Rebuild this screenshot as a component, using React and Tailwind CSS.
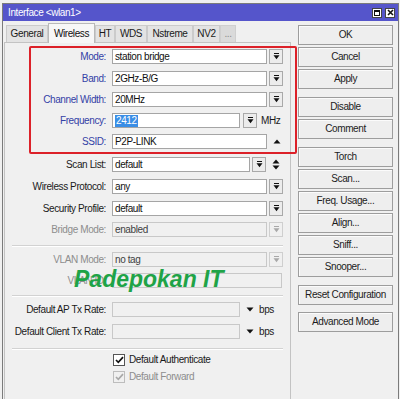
import React from "react";

const Drop = ({ disabled }) => (
  <div
    className={`ml-[2px] w-[14px] h-[15px] border flex items-center justify-center ${
      disabled ? "border-[#cfcfcf] bg-[#f0f0f0]" : "border-[#a9a9a9] bg-[#ececec]"
    }`}
  >
    <svg width="7" height="7" viewBox="0 0 7 7">
      <rect x="1" y="0" width="5" height="1" fill={disabled ? "#a8a8a8" : "#111"} />
      <path d="M0.5 2.2 L6.5 2.2 L3.5 6.2 Z" fill={disabled ? "#a8a8a8" : "#111"} />
    </svg>
  </div>
);

const Input = ({ w, children, disabled, sel }) => (
  <div
    className={`h-[15px] border flex items-center pl-[2px] ${
      disabled ? "border-[#c8c8c8] bg-[#f0f0f0] text-[#404040]" : "border-[#a5a5a5] bg-white text-[#111]"
    }`}
    style={{ width: w }}
  >
    {sel ? <span className="bg-[#3a8ee6] text-white px-[1px] leading-[12px]">{children}</span> : children}
  </div>
);

const Row = ({ label, color = "text-[#1a1a1a]", mt, children }) => (
  <div className="flex items-center h-[15px]" style={{ marginTop: mt }}>
    <div className={`w-[101px] text-right whitespace-nowrap ${color}`}>{label}</div>
    <div className="ml-[6px] flex items-center">{children}</div>
  </div>
);

const Sep = ({ mt }) => (
  <div className="ml-[7px] w-[271px] h-[2px] border-t border-[#d2d2d2] bg-white/0" style={{ marginTop: mt }}>
    <div className="h-px bg-white" />
  </div>
);

const Btn = ({ children, mt }) => (
  <div
    className="w-[95px] h-[20px] border border-[#9d9d9d] bg-[#eeeeee] shadow-[inset_1px_1px_0_#fbfbfb] flex items-center justify-center text-[#1c1c1c] whitespace-nowrap"
    style={{ marginTop: mt }}
  >
    {children}
  </div>
);

const UpTri = () => (
  <svg width="8" height="5" viewBox="0 0 8 5">
    <path d="M0.5 4.5 L7.5 4.5 L4 0.5 Z" fill="#111" />
  </svg>
);
const DownTri = () => (
  <svg width="8" height="5" viewBox="0 0 8 5">
    <path d="M0.5 0.5 L7.5 0.5 L4 4.5 Z" fill="#111" />
  </svg>
);

const Check = ({ disabled }) => (
  <div
    className={`w-[12px] h-[12px] border flex items-center justify-center ${
      disabled ? "border-[#bdbdbd] bg-[#f0f0f0]" : "border-[#555] bg-white"
    }`}
  >
    <svg width="9" height="8" viewBox="0 0 9 8">
      <path d="M1 4 L3.3 6.3 L8 1.2" stroke={disabled ? "#a8a8a8" : "#111"} strokeWidth="1.7" fill="none" />
    </svg>
  </div>
);

const BLUE = "text-[#3341a6]";
const GREY = "text-[#8d8d8d]";

export default function App() {
  const tabs = [
    ["General", 42],
    ["Wireless", 47, "sel"],
    ["HT", 20],
    ["WDS", 32],
    ["Nstreme", 46],
    ["NV2", 27],
    ["...", 16, "dis"],
  ];
  return (
    <div className="w-[400px] h-[399px] bg-[#f0f0f0] overflow-hidden relative font-['Liberation_Sans',Arial,sans-serif] text-[10px] tracking-[-0.04em] leading-none pt-[3px] pl-[2px]">
      <div className="w-[397px] h-[400px] border-l border-r border-t border-[#7b7b7b] bg-[#f0f0f0]">
        {/* title bar */}
        <div className="h-[17px] bg-[#5555cb] flex items-center pl-[5px] pr-[3px]">
          <span className="text-white">{"Interface <wlan1>"}</span>
          <div className="ml-auto flex items-center gap-[3px]">
            <div className="w-[10px] h-[10px] bg-white border border-[#444] flex items-center justify-center">
              <div className="w-[6px] h-[6px] border border-[#111] border-t-2" />
            </div>
            <div className="w-[10px] h-[10px] bg-white border border-[#444] flex items-center justify-center">
              <svg width="7" height="7" viewBox="0 0 7 7">
                <path d="M1 1 L6 6 M6 1 L1 6" stroke="#111" strokeWidth="1.6" />
              </svg>
            </div>
          </div>
        </div>
        <div className="flex pt-[2px]">
          {/* left part */}
          <div className="ml-[1px] w-[287px] flex flex-col">
            <div className="h-[20px] flex items-end pl-[2px] relative z-10">
              {tabs.map(([t, w, s]) => (
                <div
                  key={t}
                  className={`flex items-center justify-center border border-b-0 ${
                    s === "sel"
                      ? "h-[20px] bg-[#f7f7f7] border-[#b9b9b9] text-[#111]"
                      : s === "dis"
                      ? "h-[17px] mb-[1px] bg-[#dadada] border-[#cfcfcf] text-[#8a8a8a]"
                      : "h-[17px] mb-[1px] bg-[#e3e3e3] border-[#cbcbcb] text-[#1a1a1a]"
                  }`}
                  style={{ width: w }}
                >
                  {t}
                </div>
              ))}
            </div>
            <div className="-mt-[1px] h-[360px] border border-[#c3c3c3] border-b-0 flex flex-col">
              <Row label="Mode:" color={BLUE} mt={6}>
                <Input w={155}>station bridge</Input>
                <Drop />
              </Row>
              <Row label="Band:" color={BLUE} mt={7}>
                <Input w={155}>2GHz-B/G</Input>
                <Drop />
              </Row>
              <Row label="Channel Width:" color={BLUE} mt={6}>
                <Input w={155}>20MHz</Input>
                <Drop />
              </Row>
              <Row label="Frequency:" color={BLUE} mt={6}>
                <Input w={128} sel>
                  2412
                </Input>
                <div className="ml-[1px]">
                  <Drop />
                </div>
                <span className="ml-[4px] text-[#1a1a1a]">MHz</span>
              </Row>
              <Row label="SSID:" color={BLUE} mt={6}>
                <Input w={155}>P2P-LINK</Input>
                <div className="ml-[6px] flex">
                  <UpTri />
                </div>
              </Row>
              <Row label="Scan List:" mt={8}>
                <Input w={138}>default</Input>
                <Drop />
                <div className="ml-[6px] flex flex-col gap-[1px]">
                  <UpTri />
                  <DownTri />
                </div>
              </Row>
              <Row label="Wireless Protocol:" mt={7}>
                <Input w={155}>any</Input>
                <Drop />
              </Row>
              <Row label="Security Profile:" mt={7}>
                <Input w={155}>default</Input>
                <Drop />
              </Row>
              <Row label="Bridge Mode:" color={GREY} mt={6}>
                <Input w={155} disabled>
                  enabled
                </Input>
                <Drop disabled />
              </Row>
              <Sep mt={8} />
              <Row label="VLAN Mode:" color={GREY} mt={5}>
                <Input w={155} disabled>
                  no tag
                </Input>
                <Drop disabled />
              </Row>
              <Row label="VLAN ID:" color={GREY} mt={6}>
                <Input w={170} disabled></Input>
              </Row>
              <Sep mt={7} />
              <Row label="Default AP Tx Rate:" mt={5}>
                <Input w={128} disabled></Input>
                <div className="ml-[6px] flex">
                  <DownTri />
                </div>
                <span className="ml-[5px] text-[#1a1a1a]">bps</span>
              </Row>
              <Row label="Default Client Tx Rate:" mt={7}>
                <Input w={128} disabled></Input>
                <div className="ml-[6px] flex">
                  <DownTri />
                </div>
                <span className="ml-[5px] text-[#1a1a1a]">bps</span>
              </Row>
              <Sep mt={9} />
              <div className="flex items-center ml-[108px] mt-[4px] h-[12px]">
                <Check />
                <span className="ml-[4px] text-[#1a1a1a]">Default Authenticate</span>
              </div>
              <div className="flex items-center ml-[108px] mt-[5px] h-[12px]">
                <Check disabled />
                <span className="ml-[4px] text-[#8d8d8d]">Default Forward</span>
              </div>
            </div>
          </div>
          {/* right buttons */}
          <div className="ml-[7px] mt-[2px] flex flex-col">
            <Btn mt={0}>OK</Btn>
            <Btn mt={2}>Cancel</Btn>
            <Btn mt={2}>Apply</Btn>
            <Btn mt={8}>Disable</Btn>
            <Btn mt={2}>Comment</Btn>
            <Btn mt={8}>Torch</Btn>
            <Btn mt={2}>Scan...</Btn>
            <Btn mt={2}>Freq. Usage...</Btn>
            <Btn mt={2}>Align...</Btn>
            <Btn mt={2}>Sniff...</Btn>
            <Btn mt={2}>Snooper...</Btn>
            <Btn mt={8}>Reset Configuration</Btn>
            <Btn mt={7}>Advanced Mode</Btn>
          </div>
        </div>
      </div>
      {/* red annotation box */}
      <div className="absolute left-[29px] top-[46px] w-[268px] h-[108px] border-2 border-[#dc2129] rounded-[2px] pointer-events-none" />
      {/* watermark */}
      <div className="absolute left-[74px] top-[268px] text-[23px] font-bold italic text-[#1fa347] tracking-normal leading-none whitespace-nowrap">
        Padepokan IT
      </div>
    </div>
  );
}
